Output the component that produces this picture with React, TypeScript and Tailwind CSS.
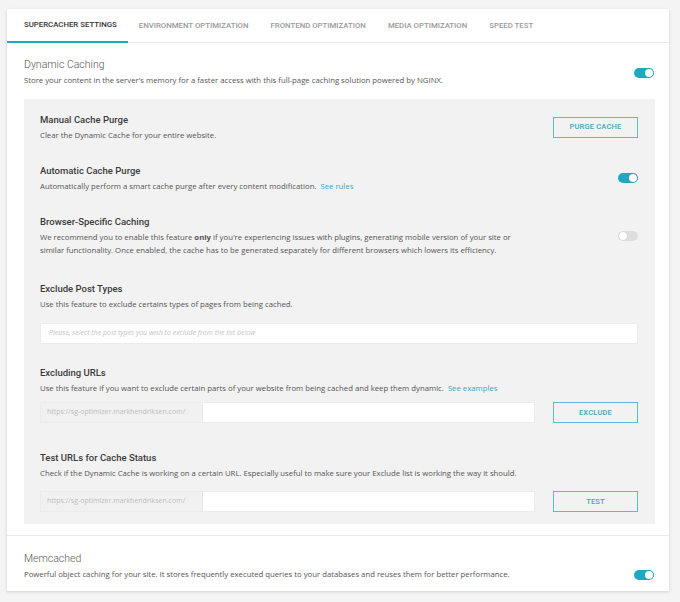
import React from "react";

const teal = "bg-[#1fa8c1]";

function Toggle({ on = true }: { on?: boolean }) {
  return (
    <div
      className={`relative w-[20px] h-[10px] rounded-full shrink-0 ${
        on ? teal : "bg-[#dedede]"
      }`}
    >
      <span
        className={`absolute top-[1px] w-[8px] h-[8px] rounded-full bg-white shadow-[0_0_1px_rgba(0,0,0,0.2)] ${
          on ? "right-[1px]" : "left-[1px]"
        }`}
      />
    </div>
  );
}

function OutlineButton({ label }: { label: string }) {
  return (
    <button className="w-[85px] h-[21px] shrink-0 border-[1.5px] border-[#5cbccb] bg-transparent text-[#3aa9bf] text-[7.5px] font-['Roboto',sans-serif] font-medium uppercase tracking-[0.2px]">
      {label}
    </button>
  );
}

function Title({ children }: { children: React.ReactNode }) {
  return (
    <div className="h-[16px] leading-[16px] text-[9.5px] font-['Roboto',sans-serif] font-medium text-[#3b3b3b]">
      {children}
    </div>
  );
}

function Desc({ children }: { children: React.ReactNode }) {
  return (
    <div className="mt-[1px] leading-[13px] text-[7.75px] font-['Open_Sans',sans-serif] text-[#555]">
      {children}
    </div>
  );
}

function UrlInput() {
  return (
    <div className="flex w-[495px] h-[21px] shrink-0 border border-[#ececec] bg-white">
      <div className="w-[162px] flex items-center pl-[6px] bg-[#f1f1f1] border-r border-[#e6e6e6] text-[7px] text-[#bdbdbd] font-['Open_Sans',sans-serif]">
        https://sg-optimizer.markhendriksen.com/
      </div>
      <div className="flex-1" />
    </div>
  );
}

const tabs = [
  "Supercacher Settings",
  "Environment Optimization",
  "Frontend Optimization",
  "Media Optimization",
  "Speed Test",
];

export default function App() {
  return (
    <div className="min-h-[602px] bg-[#f4f4f4] pt-[9px] pl-[7px] pr-[11px] font-['Open_Sans',sans-serif]">
      <div className="bg-white shadow-[0_1px_3px_rgba(0,0,0,0.15)]">
        {/* Tabs */}
        <div className="flex h-[34px] border-b border-[#e9e9e9]">
          {tabs.map((t, i) => (
            <div
              key={t}
              className={`flex items-center uppercase text-[7.8px] font-['Roboto',sans-serif] font-medium ${
                i === 0
                  ? "pl-[17px] pr-[11px] text-[#333] border-b-2 border-[#1fa8c1] -mb-px"
                  : "px-[11px] text-[#9a9a9a]"
              }`}
            >
              {t}
            </div>
          ))}
        </div>

        {/* Dynamic Caching */}
        <div className="pl-[17px] pr-[15px] pt-[15px] pb-[11px]">
          <div className="flex items-center justify-between">
            <div>
              <div className="leading-[14px] text-[10.5px] font-['Roboto',sans-serif] font-light text-[#555]">
                Dynamic Caching
              </div>
              <div className="mt-[2px] leading-[13px] text-[7.75px] text-[#555]">
                Store your content in the server's memory for a faster access
                with this full-page caching solution powered by NGINX.
              </div>
            </div>
            <Toggle />
          </div>

          <div className="mt-[12px] mr-[-1px] bg-[#f2f2f2] pl-[16px] pr-[17px] pt-[13px] pb-[12px]">
            {/* Manual */}
            <div className="flex items-center justify-between">
              <div>
                <Title>Manual Cache Purge</Title>
                <Desc>Clear the Dynamic Cache for your entire website.</Desc>
              </div>
              <OutlineButton label="Purge Cache" />
            </div>

            {/* Automatic */}
            <div className="mt-[21px] flex items-center justify-between">
              <div>
                <Title>Automatic Cache Purge</Title>
                <Desc>
                  Automatically perform a smart cache purge after every content
                  modification.{" "}
                  <span className="ml-[2px] text-[#3aa9c4]">See rules</span>
                </Desc>
              </div>
              <Toggle />
            </div>

            {/* Browser */}
            <div className="mt-[21px] flex items-center justify-between">
              <div className="w-[480px]">
                <Title>Browser-Specific Caching</Title>
                <Desc>
                  We recommend you to enable this feature{" "}
                  <b className="font-bold">only</b> if you're experiencing
                  issues with plugins, generating mobile version of your site
                  or similar functionality. Once enabled, the cache has to be
                  generated separately for different browsers which lowers its
                  efficiency.
                </Desc>
              </div>
              <Toggle on={false} />
            </div>

            {/* Exclude Post Types */}
            <div className="mt-[24px]">
              <Title>Exclude Post Types</Title>
              <Desc>
                Use this feature to exclude certains types of pages from being
                cached.
              </Desc>
              <div className="mt-[12px] h-[21px] bg-white border border-[#ececec] flex items-center pl-[8px] text-[7px] italic text-[#c4c4c4]">
                Please, select the post types you wish to exclude from the list
                below
              </div>
            </div>

            {/* Excluding URLs */}
            <div className="mt-[21px]">
              <Title>Excluding URLs</Title>
              <Desc>
                Use this feature if you want to exclude certain parts of your
                website from being cached and keep them dynamic.{" "}
                <span className="ml-[2px] text-[#3aa9c4]">See examples</span>
              </Desc>
              <div className="mt-[7px] flex items-center justify-between">
                <UrlInput />
                <OutlineButton label="Exclude" />
              </div>
            </div>

            {/* Test URLs */}
            <div className="mt-[27px]">
              <Title>Test URLs for Cache Status</Title>
              <Desc>
                Check if the Dynamic Cache is working on a certain URL.
                Especially useful to make sure your Exclude list is working the
                way it should.
              </Desc>
              <div className="mt-[11px] flex items-center justify-between">
                <UrlInput />
                <OutlineButton label="Test" />
              </div>
            </div>
          </div>
        </div>

        {/* Memcached */}
        <div className="border-t border-[#ececec] pl-[17px] pr-[15px] pt-[16px] pb-[10px] flex items-end justify-between">
          <div>
            <div className="leading-[14px] text-[10.5px] font-['Roboto',sans-serif] font-light text-[#555]">
              Memcached
            </div>
            <div className="mt-[2px] leading-[13px] text-[7.75px] text-[#555]">
              Powerful object caching for your site. It stores frequently
              executed queries to your databases and reuses them for better
              performance.
            </div>
          </div>
          <div className="mb-[1.5px]">
            <Toggle />
          </div>
        </div>
      </div>
    </div>
  );
}
